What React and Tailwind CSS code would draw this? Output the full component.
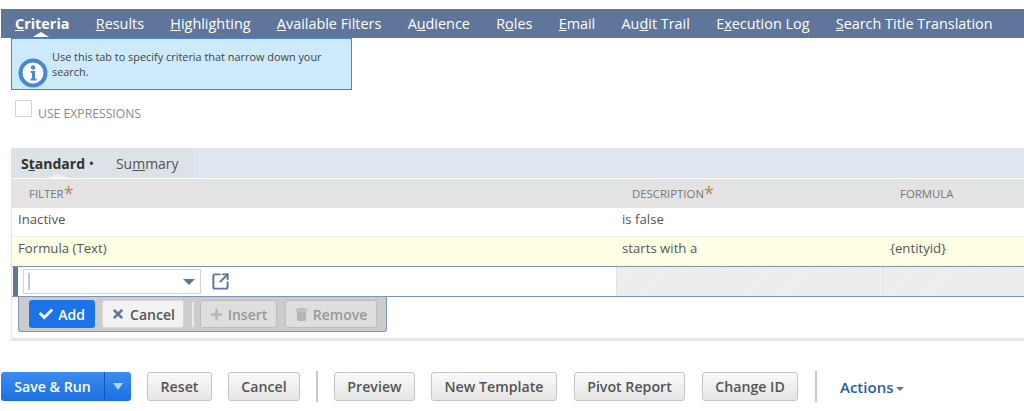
import React from 'react';
import { FaCheck, FaTimes, FaPlus, FaTrash } from 'react-icons/fa';
import { SquareArrowOutUpRight } from 'lucide-react';

const tabs = [
    { pre: '', key: 'C', post: 'riteria', active: true },
    { pre: '', key: 'R', post: 'esults' },
    { pre: '', key: 'H', post: 'ighlighting' },
    { pre: '', key: 'A', post: 'vailable Filters' },
    { pre: 'A', key: 'u', post: 'dience' },
    { pre: 'R', key: 'o', post: 'les' },
    { pre: '', key: 'E', post: 'mail' },
    { pre: 'Au', key: 'd', post: 'it Trail' },
    { pre: 'E', key: 'x', post: 'ecution Log' },
    { pre: '', key: 'S', post: 'earch Title Translation' }
];

const InfoIcon = () => (
    <svg width="30" height="30" viewBox="0 0 30 30">
        <circle cx="15" cy="15" r="12.5" fill="#fff" stroke="#4a86d6" strokeWidth="4" />
        <circle cx="15" cy="9.5" r="2.2" fill="#4a86d6" />
        <path d="M12.5 13h4.5v7.5h1.5v2h-6v-2h1.5v-5.5h-1.5z" fill="#4a86d6" />
    </svg>
);

const BottomButton = ({ children, className }) => (
    <button className={`h-[29px] rounded-[3px] border border-[#c4c4c4] bg-gradient-to-b from-[#fafafa] to-[#e5e5e5] text-[14.2px] font-semibold text-[#555] ${className}`}>
        {children}
    </button>
);

const Divider = () => <div className="h-[31px] w-[2px] bg-[#c8c8c8]" />;

const Star = () => (
    <span className="inline-block translate-y-[2px] text-[18px] leading-[0] text-[#b98a4f]">*</span>
);

const App = () => {
    return (
        <div className="h-[411px] w-[1024px] overflow-hidden bg-white pt-[9px] font-['Open_Sans',sans-serif]">
            {/* main tabs */}
            <div className="ml-[1px] flex h-[29px] items-center gap-[26.3px] bg-[#5f7599] pl-[14px] text-[14.4px] text-white">
                {tabs.map((tab) => (
                    <span key={tab.key + tab.post} className={`relative whitespace-nowrap ${tab.active ? 'font-bold' : ''}`}>
                        {tab.pre}<u>{tab.key}</u>{tab.post}
                        {tab.active && (
                            <span className="absolute left-[18px] top-[19px] h-0 w-0 border-x-[8px] border-b-[5px] border-x-transparent border-b-white" />
                        )}
                    </span>
                ))}
            </div>

            {/* help box */}
            <div className="ml-[11px] flex h-[52px] w-[341px] items-end border border-[#4a86d0] bg-[#cdeafa] pb-[1px] pl-[6px]">
                <InfoIcon />
                <p className="mb-[9px] ml-[4px] w-[285px] text-[10.9px] leading-[15px] text-[#444]">
                    Use this tab to specify criteria that narrow down your search.
                </p>
            </div>

            <div className="ml-[15px] mt-[10px] flex h-[17px] items-end gap-[6px]">
                <div className="h-[17px] w-[17px] border border-[#d5d5d5] bg-white" />
                <span className="translate-y-[5px] text-[12.2px] leading-[16px] text-[#8a8a8a]">USE EXPRESSIONS</span>
            </div>

            {/* sublist */}
            <div className="ml-[11px] mt-[31px]">
                <div className="flex h-[30px] bg-[#dfe6f0]">
                    <div className="relative flex w-[182px] items-center gap-[22px] bg-[#dde1e8] pl-[10px] text-[14px]">
                        <span className="font-bold text-[#333]">S<u>t</u>andard <span className="font-normal">•</span></span>
                        <span className="text-[#555]">Su<u>m</u>mary</span>
                        <span className="absolute left-[36px] bottom-0 h-0 w-0 border-x-[11px] border-b-[4px] border-x-transparent border-b-[#eef0f3]" />
                    </div>
                </div>
                <div className="border-b-[3px] border-l border-[#e5e5e5] pb-[6px]">
                    <div className="grid h-[30px] grid-cols-[604px_267px_1fr] items-center border-t border-white bg-[#e3e3e3] pt-[1px] text-[11.4px] text-[#777]">
                        <div className="pl-[17px]">FILTER<Star /></div>
                        <div className="pl-[16px]">DESCRIPTION<Star /></div>
                        <div className="pl-[17px]">FORMULA</div>
                    </div>
                    <div className="grid h-[29px] grid-cols-[604px_267px_1fr] items-center border-b border-[#eeeeee] pb-[5px] text-[13.2px] text-[#555]">
                        <div className="pl-[6px]">Inactive</div>
                        <div className="pl-[6px]">is false</div>
                        <div />
                    </div>
                    <div className="grid h-[29px] grid-cols-[604px_267px_1fr] items-center bg-[#ffffe6] pb-[5px] text-[13.2px] text-[#555]">
                        <div className="pl-[6px]">Formula (Text)</div>
                        <div className="pl-[6px]">starts with a</div>
                        <div className="pl-[7px]">{'{entityid}'}</div>
                    </div>

                    {/* edit row */}
                    <div className="grid h-[31px] grid-cols-[604px_267px_1fr] border-y border-[#7f93b2]">
                        <div className="ml-[1px] flex items-center border-l-[5px] border-[#5f7599] pl-[5px]">
                            <div className="flex h-[25px] w-[178px] items-center justify-between border border-[#d5d5d5] pl-[4px] pr-[5px]">
                                <div className="h-[17px] w-[2px] bg-[#c8c8c8]" />
                                <div className="h-0 w-0 border-x-[6px] border-t-[6px] border-x-transparent border-t-[#5f7599]" />
                            </div>
                            <SquareArrowOutUpRight size={19} strokeWidth={2.5} className="ml-[10px] text-[#5f7599]" />
                        </div>
                        <div className="border-l border-[#e0e0e0] bg-[repeating-linear-gradient(135deg,#efefef_0px,#efefef_1.5px,#ebebeb_1.5px,#ebebeb_3px)]" />
                        <div className="border-l border-[#e0e0e0] bg-[repeating-linear-gradient(135deg,#efefef_0px,#efefef_1.5px,#ebebeb_1.5px,#ebebeb_3px)]" />
                    </div>

                    {/* row buttons */}
                    <div className="ml-[6px] flex h-[35px] w-[369px] items-center rounded-b-[3px] border border-t-0 border-[#7f93b2] bg-[#cccccc] pl-[10px] text-[14px] font-semibold">
                        <button className="flex h-[28px] w-[66px] items-center justify-center gap-[5px] rounded-[3px] bg-[#1a73e8] text-white">
                            <FaCheck size={14} />Add
                        </button>
                        <button className="ml-[7px] flex h-[28px] w-[82px] items-center justify-center gap-[5px] rounded-[3px] border border-[#d8d8d8] bg-[#f2f2f2] text-[#555]">
                            <FaTimes size={14} className="text-[#5f7599]" />Cancel
                        </button>
                        <div className="ml-[8px] h-[25px] w-[2px] bg-[#e8e8e8]" />
                        <button className="ml-[6px] flex h-[28px] w-[77px] items-center justify-center gap-[5px] rounded-[3px] border border-[#bdbdbd] bg-[#dedede] text-[#999]">
                            <FaPlus size={13} className="text-[#b5b5b5]" />Insert
                        </button>
                        <button className="ml-[8px] flex h-[28px] w-[92px] items-center justify-center gap-[5px] rounded-[3px] border border-[#bdbdbd] bg-[#dedede] text-[#999]">
                            <FaTrash size={13} className="text-[#b5b5b5]" />Remove
                        </button>
                    </div>
                </div>
            </div>

            {/* page buttons */}
            <div className="ml-[1px] mt-[30px] flex items-center">
                <div className="flex h-[29px] w-[130px] rounded-[3px] bg-gradient-to-b from-[#3b8df0] to-[#1a6fe0] text-[14.2px] font-semibold text-white">
                    <div className="flex w-[104px] items-center justify-center border-r border-[#1557b0]">Save &amp; Run</div>
                    <div className="flex flex-1 items-center justify-center">
                        <div className="h-0 w-0 border-x-[5px] border-t-[7px] border-x-transparent border-t-[#b8d4f5]" />
                    </div>
                </div>
                <BottomButton className="ml-[16px] w-[65px]">Reset</BottomButton>
                <BottomButton className="ml-[16px] w-[72px]">Cancel</BottomButton>
                <div className="ml-[16px]"><Divider /></div>
                <BottomButton className="ml-[16px] w-[81px]">Preview</BottomButton>
                <BottomButton className="ml-[16px] w-[126px]">New Template</BottomButton>
                <BottomButton className="ml-[17px] w-[111px]">Pivot Report</BottomButton>
                <BottomButton className="ml-[17px] w-[96px]">Change ID</BottomButton>
                <div className="ml-[17px]"><Divider /></div>
                <div className="ml-[23px] flex translate-y-[1px] items-center gap-[3px] text-[15px] font-semibold text-[#2a5da8]">
                    Actions
                    <span className="h-0 w-0 translate-y-[1px] border-x-[4px] border-t-[4px] border-x-transparent border-t-[#5f7599]" />
                </div>
            </div>
        </div>
    );
};

export default App;
